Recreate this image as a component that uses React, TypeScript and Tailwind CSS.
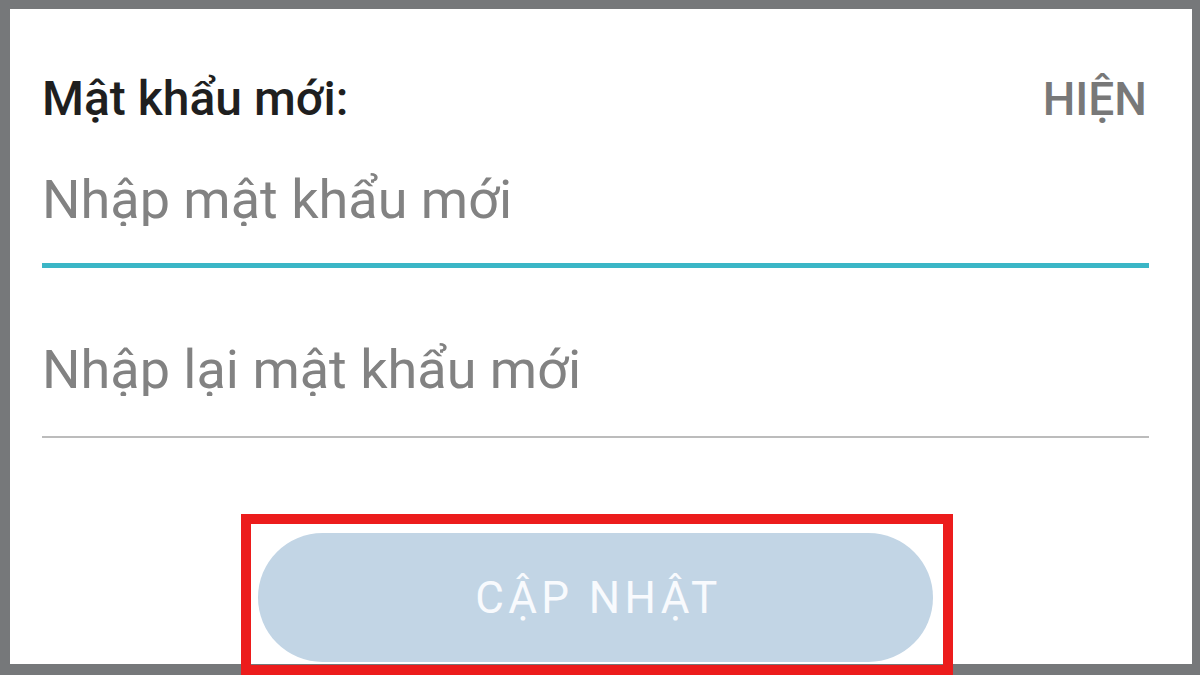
import { useState } from "react";

export default function App() {
  const [show, setShow] = useState(false);

  return (
    <div
      className="relative h-[675px] w-[1200px] overflow-hidden bg-[#76787a] pt-[9px] pr-[8px] pb-[11px] pl-[10px]"
      style={{ fontFamily: "Roboto, 'Noto Sans', sans-serif" }}
    >
      <div className="flex h-full flex-col bg-white pr-[43px] pl-[32px]">
        {/* label row */}
        <div className="mt-[66px] flex items-baseline justify-between">
          <span className="text-[48px] leading-[48px] font-medium text-[#1f1f1f]">
            Mật khẩu mới:
          </span>
          <button
            onClick={() => setShow(!show)}
            className="mr-[2px] text-[46px] leading-[46px] font-medium text-[#787878]"
          >
            {show ? "ẨN" : "HIỆN"}
          </button>
        </div>

        <input
          type={show ? "text" : "password"}
          placeholder="Nhập mật khẩu mới"
          className="mt-[50px] h-[53px] w-full bg-transparent p-0 text-[54px] leading-[53px] text-[#333] outline-none placeholder:text-[#828282]"
        />
        <div className="mt-[37px] h-[5px] w-full bg-[#3bb6c6]" />

        <input
          type={show ? "text" : "password"}
          placeholder="Nhập lại mật khẩu mới"
          className="mt-[75px] h-[53px] w-full bg-transparent p-0 text-[54px] leading-[53px] text-[#333] outline-none placeholder:text-[#828282]"
        />
        <div className="mt-[40px] h-[2px] w-full bg-[#bcbcbc]" />

        <button className="mt-[95px] ml-[216px] flex h-[129px] w-[675px] items-center justify-center rounded-full bg-[#c2d5e5] pl-[6px] text-[44px] tracking-[0.1em] text-[#f8fafd]">
          CẬP NHẬT
        </button>
      </div>

      {/* red annotation frame */}
      <div className="pointer-events-none absolute top-[514px] left-[241px] h-[180px] w-[712px] border-[10px] border-[#ec1c1c]" />
      <div className="pointer-events-none absolute top-[665px] left-[241px] h-[10px] w-[712px] bg-[#ec1c1c]" />
    </div>
  );
}
